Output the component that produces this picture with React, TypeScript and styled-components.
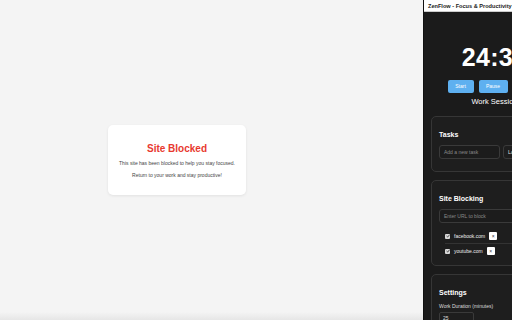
import React from "react";
import styled, { createGlobalStyle } from "styled-components";

const Global = createGlobalStyle`
  html, body { margin: 0; padding: 0; overflow: hidden; }
  body { font-family: "Liberation Sans", Arial, sans-serif; }
`;

const Page = styled.div`
  width: 512px;
  height: 320px;
  display: flex;
  overflow: hidden;
`;

const Main = styled.div`
  flex: 0 0 423px;
  height: 320px;
  background: linear-gradient(to bottom, #f4f4f4 0, #f4f4f4 312px, #e6e6e6 320px);
  display: flex;
  align-items: center;
  padding-left: 108px;
  box-sizing: border-box;
`;

const BlockCard = styled.div`
  width: 138px;
  height: 70px;
  margin-top: -1px;
  background: #fff;
  border-radius: 5px;
  box-shadow: 0 1px 3px rgba(0, 0, 0, 0.08);
  display: flex;
  flex-direction: column;
  align-items: center;
  padding-top: 18px;
  box-sizing: border-box;
`;

const BlockTitle = styled.div`
  color: #e8392f;
  font-weight: bold;
  font-size: 10px;
  line-height: 12px;
  margin-bottom: 5px;
`;

const BlockText = styled.div`
  color: #444;
  font-size: 5px;
  line-height: 6px;
  margin-bottom: 6px;
`;

const Panel = styled.div`
  flex: 0 0 142px;
  min-width: 0;
  background: #1b1b1b;
  border-left: 1px solid #111;
  display: flex;
  flex-direction: column;
  box-sizing: border-box;
`;

const Header = styled.div`
  height: 12px;
  background: #fff;
  color: #222;
  font-weight: bold;
  font-size: 5.6px;
  line-height: 12px;
  padding-left: 4px;
  white-space: nowrap;
  border-bottom: 1px solid #ccc;
  box-sizing: border-box;
`;

const Timer = styled.div`
  display: flex;
  flex-direction: column;
  align-items: center;
  padding-top: 32px;
`;

const Time = styled.div`
  color: #fff;
  font-weight: bold;
  font-size: 25px;
  line-height: 27px;
  letter-spacing: 0.3px;
`;

const ButtonRow = styled.div`
  display: flex;
  gap: 5px;
  margin-top: 9px;
`;

const Btn = styled.div<{ $w: number }>`
  width: ${(p) => p.$w}px;
  height: 13px;
  background: #5eb0f0;
  border-radius: 2px;
  color: #fff;
  font-size: 5px;
  line-height: 13px;
  text-align: center;
`;

const Session = styled.div`
  color: #fff;
  font-size: 7.5px;
  line-height: 9px;
  margin-top: 4px;
`;

const Cards = styled.div`
  display: flex;
  flex-direction: column;
  gap: 8px;
  padding: 0 7px;
  margin-top: 10px;
`;

const Card = styled.div<{ $h: number }>`
  height: ${(p) => p.$h}px;
  border: 1px solid #363636;
  border-radius: 5px;
  background: #1e1e1e;
  padding: 14px 7px 0;
  box-sizing: border-box;
`;

const CardTitle = styled.div`
  color: #fff;
  font-weight: bold;
  font-size: 7px;
  line-height: 8px;
  margin-bottom: 6px;
`;

const InputRow = styled.div`
  display: flex;
  gap: 3px;
`;

const Input = styled.div<{ $w?: number }>`
  width: ${(p) => (p.$w ? `${p.$w}px` : "100%")};
  flex-shrink: 0;
  height: 14px;
  border: 1px solid #3a3a3a;
  border-radius: 3px;
  background: #1c1c1c;
  color: #8a8a8a;
  font-size: 5px;
  line-height: 12px;
  padding-left: 4px;
  box-sizing: border-box;
  white-space: nowrap;
`;

const SmallBtn = styled.div`
  height: 14px;
  width: 30px;
  border: 1px solid #3a3a3a;
  border-radius: 3px;
  color: #ddd;
  font-size: 5.5px;
  line-height: 12px;
  padding-left: 4px;
  box-sizing: border-box;
`;

const SiteList = styled.div`
  margin-top: 6px;
  padding-left: 6px;
`;

const SiteRow = styled.div<{ $sep?: boolean }>`
  display: flex;
  align-items: center;
  height: 14px;
  border-bottom: 1px solid ${(p) => (p.$sep ? "#333" : "transparent")};
`;

const Check = styled.span`
  width: 5px;
  height: 5px;
  background: #d8d8d8;
  border-radius: 1px;
  display: inline-flex;
  align-items: center;
  justify-content: center;
  margin-right: 4px;
`;

const SiteName = styled.span`
  color: #eee;
  font-size: 5px;
  line-height: 6px;
  margin-right: 4px;
`;

const Remove = styled.span`
  width: 8px;
  height: 8px;
  background: #fff;
  border-radius: 1px;
  color: #333;
  font-size: 5px;
  line-height: 8px;
  text-align: center;
`;

const Label = styled.div`
  color: #ddd;
  font-size: 5px;
  line-height: 6px;
  margin-bottom: 3px;
`;

const NumInput = styled.div`
  width: 35px;
  height: 12px;
  border: 1px solid #3a3a3a;
  border-radius: 2px;
  color: #ddd;
  font-size: 5px;
  line-height: 10px;
  padding-left: 3px;
  box-sizing: border-box;
`;

const CheckMark = () => (
  <svg width="4" height="4" viewBox="0 0 10 10">
    <path d="M1.5 5.2 L4 7.6 L8.6 2.4" stroke="#222" strokeWidth="2" fill="none" />
  </svg>
);

export default function App() {
  return (
    <Page>
      <Global />
      <Main>
        <BlockCard>
          <BlockTitle>Site Blocked</BlockTitle>
          <BlockText>This site has been blocked to help you stay focused.</BlockText>
          <BlockText>Return to your work and stay productive!</BlockText>
        </BlockCard>
      </Main>
      <Panel>
        <Header>ZenFlow - Focus &amp; Productivity</Header>
        <Timer>
          <Time>24:30</Time>
          <ButtonRow>
            <Btn $w={26}>Start</Btn>
            <Btn $w={29}>Pause</Btn>
            <Btn $w={29}>Reset</Btn>
          </ButtonRow>
          <Session>Work Session</Session>
        </Timer>
        <Cards>
          <Card $h={56}>
            <CardTitle>Tasks</CardTitle>
            <InputRow>
              <Input $w={61}>Add a new task</Input>
              <SmallBtn>Log</SmallBtn>
            </InputRow>
          </Card>
          <Card $h={86}>
            <CardTitle>Site Blocking</CardTitle>
            <Input>Enter URL to block</Input>
            <SiteList>
              <SiteRow $sep>
                <Check><CheckMark /></Check>
                <SiteName>facebook.com</SiteName>
                <Remove>×</Remove>
              </SiteRow>
              <SiteRow>
                <Check><CheckMark /></Check>
                <SiteName>youtube.com</SiteName>
                <Remove>×</Remove>
              </SiteRow>
            </SiteList>
          </Card>
          <Card $h={60}>
            <CardTitle>Settings</CardTitle>
            <Label>Work Duration (minutes)</Label>
            <NumInput>25</NumInput>
          </Card>
        </Cards>
      </Panel>
    </Page>
  );
}
